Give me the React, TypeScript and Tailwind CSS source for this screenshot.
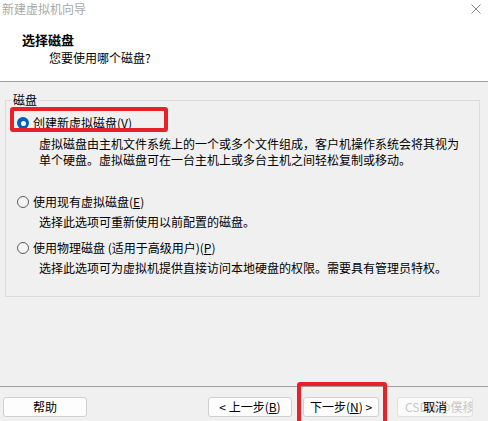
const font = "font-['Noto_Sans_CJK_SC',sans-serif]";

function Radio({ checked }: { checked?: boolean }) {
  if (checked) {
    return (
      <span className="w-[12px] h-[12px] rounded-full bg-[#005fb8] flex items-center justify-center shrink-0">
        <span className="w-[5px] h-[5px] rounded-full bg-white" />
      </span>
    );
  }
  return <span className="w-[12px] h-[12px] rounded-full border border-[#5c5c5c] bg-[#f5f5f5] shrink-0" />;
}

function Btn({ children, className = '' }: { children: React.ReactNode; className?: string }) {
  return (
    <div
      className={`h-[20px] rounded-[3px] border border-[#d0d0d0] bg-[#fdfdfd] flex items-center justify-center text-[12px] leading-none text-black whitespace-nowrap ${className}`}
    >
      {children}
    </div>
  );
}

export default function App() {
  return (
    <div className={`w-[488px] h-[421px] bg-[#f0f0f0] flex flex-col relative overflow-hidden ${font}`}>
      {/* Header */}
      <div className="h-[82px] bg-white border-b border-[#a0a0a0] relative">
        <div className="pl-[2px] pt-[1px] text-[12px] leading-[16px] text-[#a8a8a8]">新建虚拟机向导</div>
        <svg className="absolute left-[471px] top-[4px]" width="10" height="10" viewBox="0 0 10 10">
          <path d="M0.5 0.5 L9.5 9.5 M9.5 0.5 L0.5 9.5" stroke="#8a8a8a" strokeWidth="1" fill="none" />
        </svg>
        <div className="pl-[22px] mt-[15px] text-[13px] leading-[16px] font-bold text-black">选择磁盘</div>
        <div className="pl-[49px] mt-[2px] text-[12px] leading-[16px] text-black">您要使用哪个磁盘?</div>
      </div>

      {/* Body */}
      <div className="flex-1 pl-[5px] pr-[8px]">
        <fieldset className="mt-[11px] border border-[#dcdcdc] pb-[20px]">
          <legend className="ml-[5px] px-[2px] text-[12px] leading-[14px] text-black">磁盘</legend>
          <div className="pt-[8px] pl-[11px] text-[12px] text-black">
            <div className="flex items-center gap-[4px] h-[16px]">
              <Radio checked />
              <span>
                创建新虚拟磁盘(<span className="underline">V</span>)
              </span>
            </div>
            <div className="mt-[5px] pl-[22px] leading-[16px]">
              <div>虚拟磁盘由主机文件系统上的一个或多个文件组成，客户机操作系统会将其视为</div>
              <div>单个硬盘。虚拟磁盘可在一台主机上或多台主机之间轻松复制或移动。</div>
            </div>

            <div className="mt-[26px] flex items-center gap-[4px] h-[16px]">
              <Radio />
              <span>
                使用现有虚拟磁盘(<span className="underline">E</span>)
              </span>
            </div>
            <div className="mt-[4px] pl-[22px] leading-[16px]">选择此选项可重新使用以前配置的磁盘。</div>

            <div className="mt-[10px] flex items-center gap-[4px] h-[16px]">
              <Radio />
              <span>
                使用物理磁盘 (适用于高级用户)(<span className="underline">P</span>)
              </span>
            </div>
            <div className="mt-[4px] pl-[22px] leading-[16px]">
              选择此选项可为虚拟机提供直接访问本地硬盘的权限。需要具有管理员特权。
            </div>
          </div>
        </fieldset>
      </div>

      {/* Footer */}
      <div className="h-[35px] border-t border-[#a0a0a0] flex items-start pt-[10px] pl-[3px] pr-[15px]">
        <Btn className="w-[84px]">帮助</Btn>
        <div className="flex-1" />
        <Btn className="w-[84px]">
          &lt; 上一步(<span className="underline">B</span>)
        </Btn>
        <Btn className="w-[76px] ml-[11px]">
          下一步(<span className="underline">N</span>) &gt;
        </Btn>
        <div className="w-[76px] ml-[18px] h-[20px] rounded-[3px] border border-[#e0e0e0] bg-[#fafafa] relative flex items-center justify-center overflow-hidden">
          <span className="absolute left-[7px] top-[3px] text-[12px] leading-[12px] whitespace-nowrap text-[#c8c8c8]">CSDN @僕移</span>
          <span className="relative text-[12px] leading-none text-black">取消</span>
        </div>
      </div>

      {/* Annotation boxes */}
      <div className="absolute left-[10px] top-[107px] w-[158px] h-[25px] border-[4px] border-[#e8202a] rounded-[3px]" />
      <div className="absolute left-[297px] top-[382px] w-[90px] h-[50px] border-[4px] border-[#e8202a] rounded-[3px]" />
    </div>
  );
}
